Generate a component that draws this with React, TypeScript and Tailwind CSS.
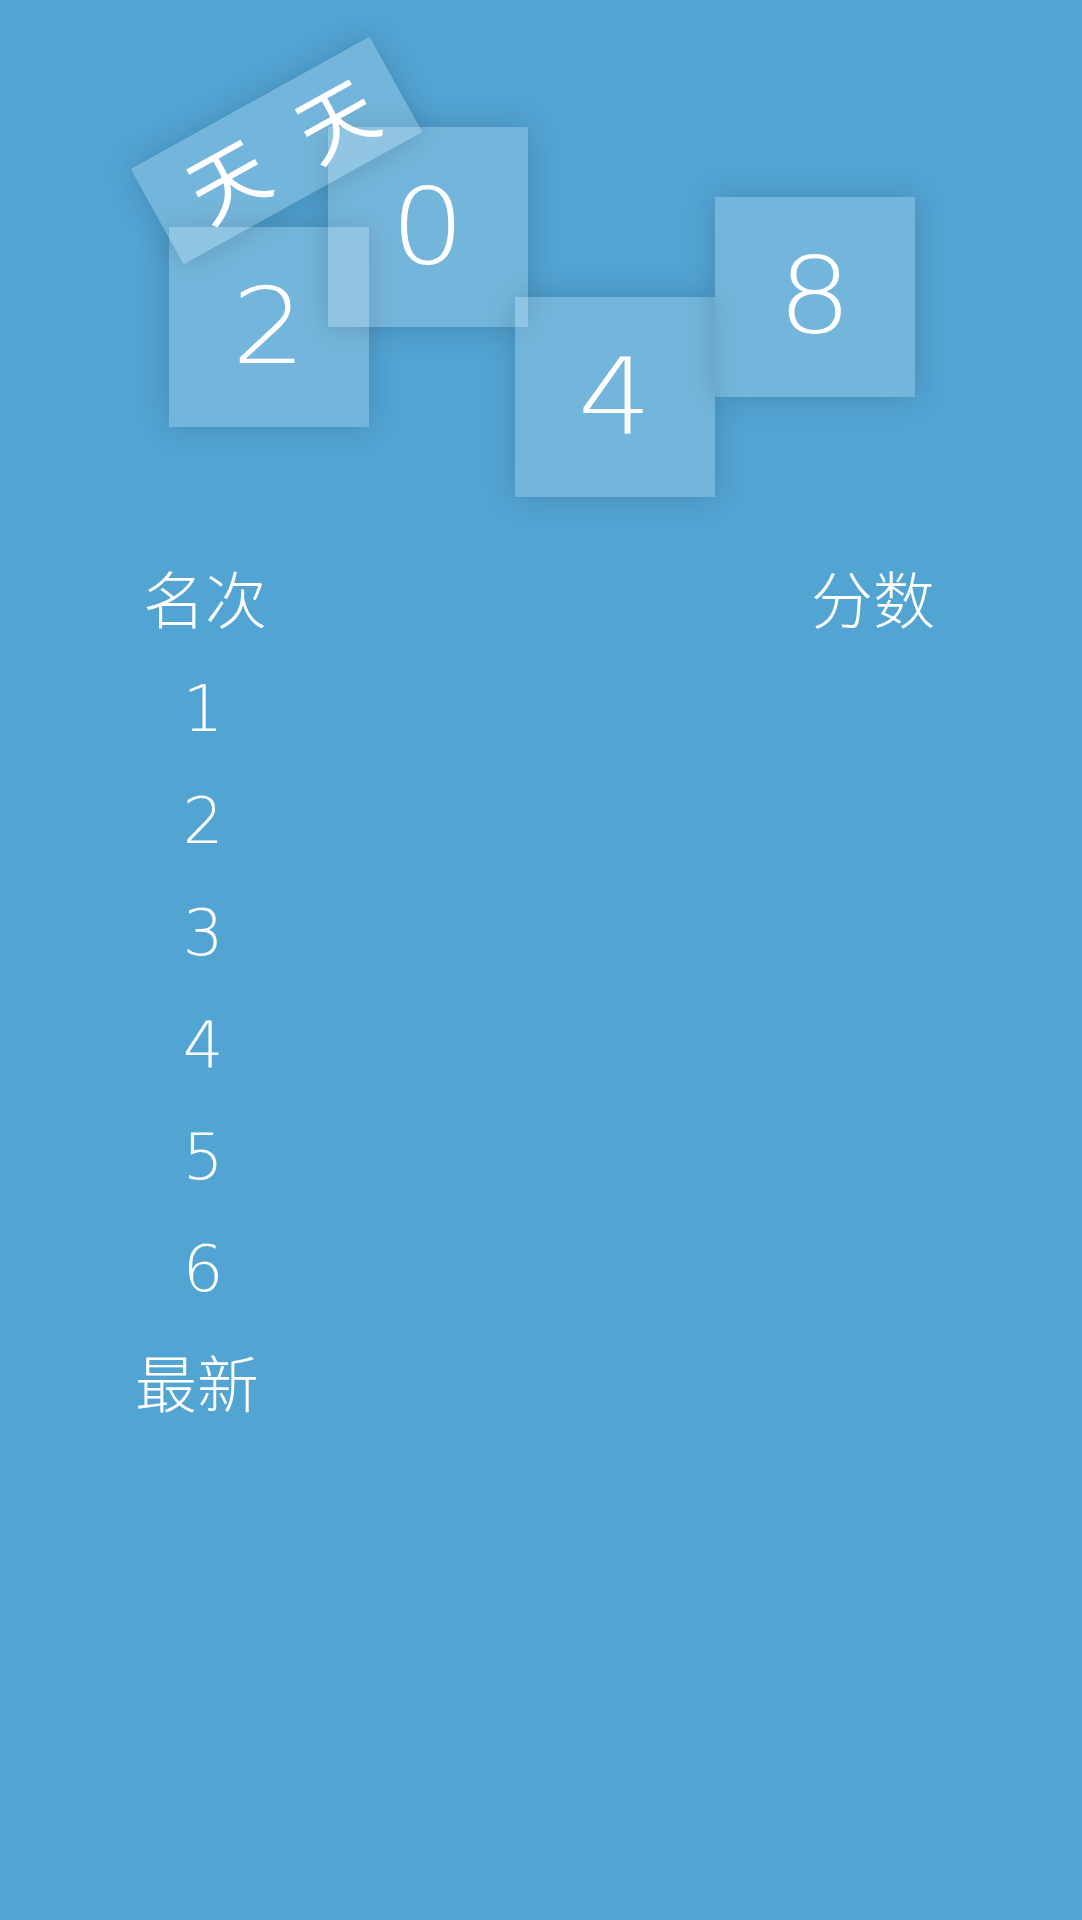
const tiles = [
  { n: '2', cls: 'left-[169px] top-[227px] z-10' },
  { n: '0', cls: 'left-[328px] top-[127px] z-20' },
  { n: '4', cls: 'left-[515px] top-[297px] z-30' },
  { n: '8', cls: 'left-[715px] top-[197px] z-40' },
];

const ranks = ['1', '2', '3', '4', '5', '6'];

function Logo() {
  return (
    <div className="relative h-[541px] w-full">
      {/* 天天 banner */}
      <div className="absolute left-[140px] top-[96px] z-50 flex h-[109px] w-[273px] -rotate-[29deg] items-center justify-center bg-white/20 shadow-[0_0_30px_rgba(0,0,0,0.16)]">
        <span className="translate-x-[28px] -translate-y-[2px] text-[78px] leading-none tracking-[46px] text-white [font-family:'Noto_Sans_CJK_SC',sans-serif]">
          天天
        </span>
      </div>
      {tiles.map((t) => (
        <div
          key={t.n}
          className={`absolute flex h-[200px] w-[200px] items-center justify-center bg-white/20 shadow-[0_0_30px_rgba(0,0,0,0.16)] ${t.cls}`}
        >
          <span className="scale-x-[1.1] text-[106px] font-extralight leading-none text-white [font-family:'DejaVu_Sans',sans-serif]">{t.n}</span>
        </div>
      ))}
    </div>
  );
}

function App() {
  return (
    <div className="min-h-[1920px] w-full bg-[#52a4d3] text-white">
      <Logo />
      <div className="flex flex-col">
        {/* header */}
        <div className="flex h-[112px] items-center justify-between pl-[142px] pr-[147px] [font-family:'Noto_Sans_CJK_SC',sans-serif]">
          <span className="w-[126px] text-center text-[62px] font-light leading-none">名次</span>
          <span className="text-[62px] font-light leading-none">分数</span>
        </div>
        {ranks.map((r) => (
          <div key={r} className="flex h-[112px] items-center pl-[140px]">
            <span className="w-[126px] text-center text-[64px] font-extralight leading-none [font-family:'DejaVu_Sans',sans-serif]">
              {r}
            </span>
          </div>
        ))}
        <div className="flex h-[112px] items-center pl-[135px]">
          <span className="text-[62px] font-light leading-none [font-family:'Noto_Sans_CJK_SC',sans-serif]">最新</span>
        </div>
      </div>
    </div>
  );
}

export default App;
